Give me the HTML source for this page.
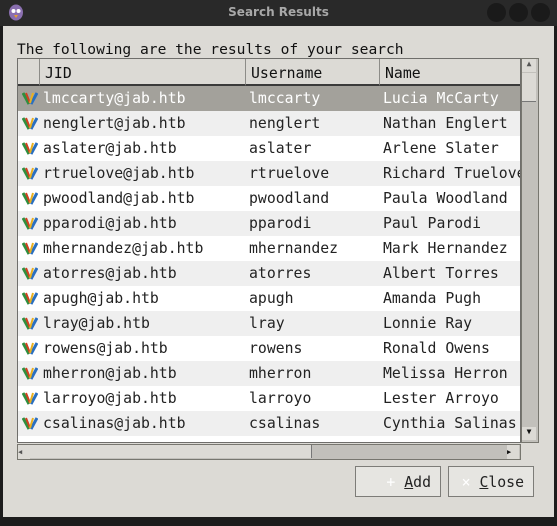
<!DOCTYPE html><html><head><style>
body{margin:0;width:557px;height:526px;background:#1c1c1c;overflow:hidden;font-family:"DejaVu Sans Mono","Liberation Mono",monospace;position:relative}
.tb{position:absolute;left:0;top:0;width:557px;height:26px;background:#292929}
.title{position:absolute;left:0;width:557px;top:5px;text-align:center;color:#a8a8a8;font:bold 12px "DejaVu Sans",sans-serif}
.c{position:absolute;top:3px;width:19px;height:19px;border-radius:50%;background:#1a1a1a}
.win{position:absolute;left:3px;top:26px;width:551px;height:491px;background:#dcdad5}
.lbl{position:absolute;left:17px;top:41px;font-size:14.6px;color:#111}
.tbl{position:absolute;left:17px;top:58px;width:502px;height:383px;border:1px solid #6f6e6b;background:#fff;overflow:hidden}
.hd{position:absolute;top:0;height:27px;background:#dcdad5;border-right:1px solid #8d8c88;border-bottom:2px solid #3a3a3a;box-sizing:border-box;font-size:14.8px;padding:6px 0 0 5px;color:#111}
.row{position:absolute;left:0;width:502px;height:25px;font-size:14.8px;color:#222}
.row span{position:absolute;top:4px}
.ic{position:absolute;left:4px;top:5px}
.sb{position:absolute;background:#c2c0bb;border:1px solid #77766f}
.btn{position:absolute;top:466px;height:31px;border:1px solid #7d7c78;background:#e6e5e1;box-sizing:border-box;font-size:14.8px;color:#222;text-align:right;padding:7px 9px 0 0}
</style></head><body>
<div class="tb">
<svg style="position:absolute;left:8px;top:4px" width="16" height="17"><ellipse cx="8" cy="8.5" rx="7" ry="8" fill="#8a6fb0"/><circle cx="5.5" cy="7" r="2" fill="#fff"/><circle cx="10.5" cy="7" r="2" fill="#fff"/><path d="M6 11h4l-2 3z" fill="#e8a030"/></svg>
<div class="title">Search Results</div>
<div class="c" style="left:487px"></div><div class="c" style="left:509px"></div><div class="c" style="left:531px"></div>
</div>
<div class="win"></div>
<div class="lbl">The following are the results of your search</div>
<div class="tbl" id="t">
<div class="hd" style="left:0;width:22px"></div>
<div class="hd" style="left:22px;width:206px">JID</div>
<div class="hd" style="left:228px;width:134px">Username</div>
<div class="hd" style="left:362px;width:140px;border-right:none">Name</div>
</div>
<div class="sb" style="left:521px;top:58px;width:16px;height:383px;background:#c2c0bb"></div>
<div class="sb" style="left:522px;top:59px;width:14px;height:13px;background:#dcdad5;border:none;font-size:8px;text-align:center;color:#555">▲</div>
<div class="sb" style="left:522px;top:73px;width:14px;height:28px;background:#dcdad5;border:none;border-bottom:1px solid #777"></div>
<div class="sb" style="left:522px;top:427px;width:14px;height:13px;background:#dcdad5;border:none;font-size:8px;text-align:center;color:#111">▼</div>
<div class="sb" style="left:17px;top:444px;width:502px;height:14px"></div>
<div class="sb" style="left:18px;top:445px;width:12px;height:14px;background:#dcdad5;border:none;font-size:7px;color:#555;line-height:14px">◀</div>
<div class="sb" style="left:30px;top:445px;width:281px;height:13px;background:#dcdad5;border:none;border-right:1px solid #777"></div>
<div class="sb" style="left:507px;top:445px;width:12px;height:14px;background:#dcdad5;border:none;font-size:7px;color:#111;line-height:14px">▶</div>
<div class="btn" style="left:355px;width:86px"><span style="color:#fff">+</span> <u>A</u>dd</div>
<div class="btn" style="left:448px;width:86px"><span style="color:#fff">×</span> <u>C</u>lose</div>
<script>
var d=[["lmccarty","Lucia McCarty"],["nenglert","Nathan Englert"],["aslater","Arlene Slater"],["rtruelove","Richard Truelove"],["pwoodland","Paula Woodland"],["pparodi","Paul Parodi"],["mhernandez","Mark Hernandez"],["atorres","Albert Torres"],["apugh","Amanda Pugh"],["lray","Lonnie Ray"],["rowens","Ronald Owens"],["mherron","Melissa Herron"],["larroyo","Lester Arroyo"],["csalinas","Cynthia Salinas"],["",""]];
var t=document.getElementById('t'),h='';
var ic='<svg class="ic" width="16" height="15"><path d="M1 2 L7 13" stroke="#2f8f3f" stroke-width="3"/><path d="M4 2 L8 12" stroke="#d04020" stroke-width="2"/><path d="M15 2 L9 13" stroke="#2a6fc0" stroke-width="3"/><path d="M11 2 L8 12" stroke="#e8b020" stroke-width="2"/></svg>';
d.forEach(function(r,i){var bg=i==0?'#a3a19b':(i%2?'#efefef':'#ffffff');var col=i==0?'#fff':'#222';
h+='<div class="row" style="top:'+(27+i*25)+'px;background:'+bg+';color:'+col+'">'+(r[0]?ic+'<span style="left:25px">'+r[0]+'@jab.htb</span><span style="left:231px">'+r[0]+'</span><span style="left:365px;white-space:nowrap">'+r[1]+'</span>':'')+'</div>';});
t.insertAdjacentHTML('beforeend',h);
</script>
</body></html>
